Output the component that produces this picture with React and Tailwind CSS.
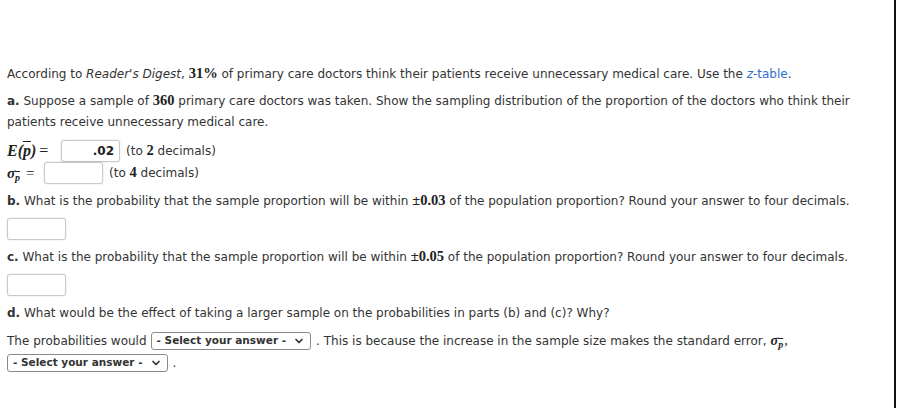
import { ChevronDown } from "lucide-react";

const Num = ({ children }) => (
  <span className="font-['Liberation_Serif',serif] text-[14.5px] leading-none font-bold text-[#222]">{children}</span>
);

const AnswerBox = ({ value, className = "" }) => (
  <span
    className={`inline-flex h-[22px] w-[59px] items-center justify-end rounded-[3px] border border-[#c8c8c8] bg-white pr-[5px] shadow-[0_0_2px_rgba(0,0,0,0.15)] ${className}`}
  >
    {value && <span className="font-bold text-[#222]">{value}</span>}
  </span>
);

const SelectBox = ({ className = "" }) => (
  <span
    className={`inline-flex h-[18px] items-center gap-[7px] rounded-[3px] border border-[#8a8a8a] bg-white pl-[5px] pr-[5px] text-[10.5px] font-bold text-[#333] ${className}`}
  >
    - Select your answer -
    <ChevronDown size={12} strokeWidth={3.5} className="text-[#333]" />
  </span>
);

export default function App() {
  return (
    <div className="flex h-[408px] w-[898px] bg-white">
      <div className="w-[894px] pl-[7px] pt-[64px] font-['DejaVu_Sans',Verdana,sans-serif] text-[12px] text-[#333]">
        <p className="leading-[21px]">
          According to <i>Reader's Digest</i>, <Num>31%</Num> of primary care doctors think their patients receive
          unnecessary medical care. Use the <span className="text-[#2f6fd1]"><i>z</i>-table</span>.
        </p>
        <p className="mt-[6px] w-[870px] leading-[21px]">
          <b>a.</b> Suppose a sample of <Num>360</Num> primary care doctors was taken. Show the sampling distribution of
          the proportion of the doctors who think their patients receive unnecessary medical care.
        </p>
        <div className="mt-[7px] flex h-[22px] items-center">
          <span className="w-[54px] font-['Liberation_Serif',serif] text-[16px] leading-none font-bold italic text-[#222]">
            E(<span className="overline">p</span>)<span className="ml-[3px] not-italic font-normal">=</span>
          </span>
          <AnswerBox value=".02" />
          <span className="ml-[6px]">
            (to <Num>2</Num> decimals)
          </span>
        </div>
        <div className="flex h-[22px] items-center">
          <span className="flex w-[37px] items-baseline font-['Liberation_Serif',serif] text-[15px] leading-none font-bold italic text-[#222]">
            σ<span className="relative top-[3px] text-[10px] overline">p</span>
            <span className="ml-[6px] not-italic font-normal">=</span>
          </span>
          <AnswerBox />
          <span className="ml-[6px]">
            (to <Num>4</Num> decimals)
          </span>
        </div>
        <p className="mt-[7px] leading-[21px]">
          <b>b.</b> What is the probability that the sample proportion will be within <Num>±0.03</Num> of the population
          proportion? Round your answer to four decimals.
        </p>
        <div className="mt-[6px] flex">
          <AnswerBox />
        </div>
        <p className="mt-[7px] leading-[21px]">
          <b>c.</b> What is the probability that the sample proportion will be within <Num>±0.05</Num> of the population
          proportion? Round your answer to four decimals.
        </p>
        <div className="mt-[6px] flex">
          <AnswerBox />
        </div>
        <p className="mt-[7px] leading-[21px]">
          <b>d.</b> What would be the effect of taking a larger sample on the probabilities in parts (b) and (c)? Why?
        </p>
        <div className="mt-[6px] flex h-[21px] items-center">
          <span>The probabilities would</span>
          <SelectBox className="ml-[4px]" />
          <span className="ml-[5px]">. This is because the increase in the sample size makes the standard error,</span>
          <span className="ml-[4px] flex items-baseline font-['Liberation_Serif',serif] text-[14px] leading-none font-bold italic text-[#222]">
            σ<span className="relative top-[3px] text-[10px] overline">p</span>
            <span className="ml-[1px] font-normal">,</span>
          </span>
        </div>
        <div className="mt-[2px] flex h-[20px] items-center">
          <SelectBox />
          <span className="ml-[5px]">.</span>
        </div>
      </div>
      <div className="h-full w-[2px] bg-[#111]" />
    </div>
  );
}
